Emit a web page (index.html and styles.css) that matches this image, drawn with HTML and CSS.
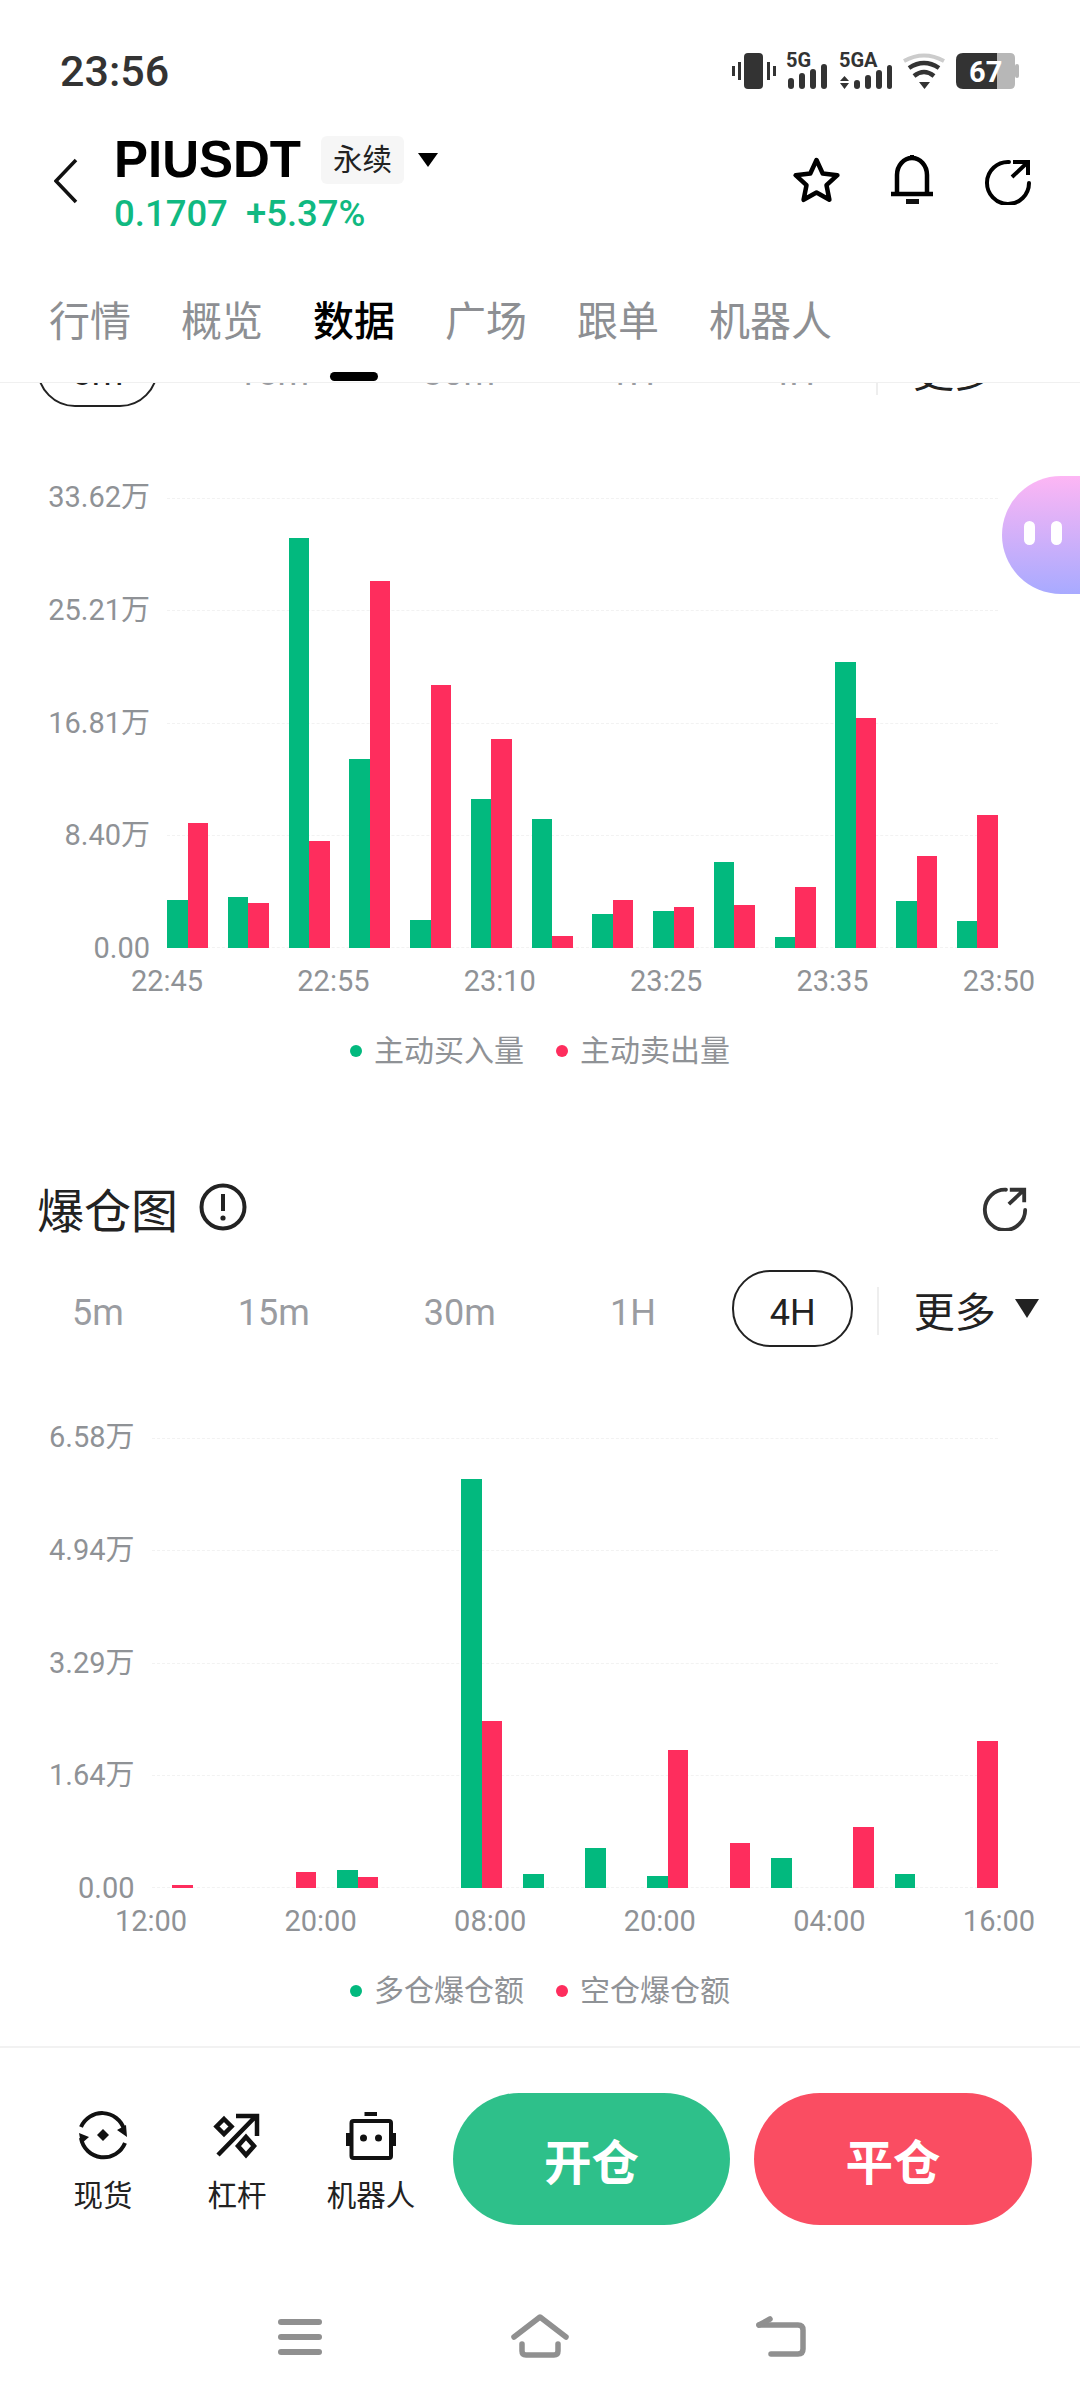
FILE: index.html
```html
<!DOCTYPE html>
<html lang="zh-CN">
<head>
    <meta charset="UTF-8">
    <meta name="viewport" content="width=device-width, initial-scale=1.0">
    <title>PIUSDT 数据</title>
    <link rel="stylesheet" href="styles.css">
</head>
<body>
    <svg class="defs" width="0" height="0">
        <symbol id="share-icon" viewBox="0 0 50 50">
            <path d="M26 7A21 21 0 1 0 46 28" fill="none" stroke="currentColor" stroke-width="4" stroke-linecap="round"/>
            <path d="M29 22L45 7M30 7H45V20" fill="none" stroke="currentColor" stroke-width="4"/>
        </symbol>
    </svg>

    <header class="page-header">
        <div class="status-bar">
            <span class="clock">23:56</span>
            <div class="status-icons">
                <svg width="44" height="36" viewBox="0 0 44 36" fill="#333">
                    <rect x="12" y="0" width="19" height="36" rx="4"/>
                    <rect x="6" y="9" width="3" height="18"/>
                    <rect x="0" y="13" width="3" height="10"/>
                    <rect x="35" y="9" width="3" height="18"/>
                    <rect x="41" y="13" width="3" height="10"/>
                </svg>
                <svg width="43" height="36" viewBox="0 0 43 36" fill="#333">
                    <text x="0" y="14" class="net-label">5G</text>
                    <rect x="2" y="25" width="6" height="11" rx="3"/>
                    <rect x="13" y="20" width="6" height="16" rx="3"/>
                    <rect x="24" y="16" width="6" height="20" rx="3"/>
                    <rect x="35" y="11" width="6" height="25" rx="3"/>
                </svg>
                <svg width="53" height="36" viewBox="0 0 53 36" fill="#333">
                    <text x="0" y="14" class="net-label">5GA</text>
                    <path d="M1 28L5.5 23L10 28ZM1 30L5.5 36L10 30Z"/>
                    <rect x="15" y="27" width="6" height="9" rx="3"/>
                    <rect x="26" y="22" width="6" height="14" rx="3"/>
                    <rect x="37" y="17" width="6" height="19" rx="3"/>
                    <rect x="48" y="12" width="5" height="24" rx="2.5"/>
                </svg>
                <svg width="44" height="36" viewBox="0 0 44 36" fill="none">
                    <path d="M2 8Q22 -3 42 8" stroke="#ccc" stroke-width="4"/>
                    <path d="M7 15Q22 5 37 15" stroke="#333" stroke-width="4.5"/>
                    <path d="M12 23Q22 15 32 23" stroke="#333" stroke-width="4.5"/>
                    <path d="M17 29H28L22.5 36Z" fill="#333"/>
                </svg>
                <svg width="64" height="36" viewBox="0 0 64 36">
                    <path d="M41 0H54Q59 0 59 5V31Q59 36 54 36H41Z" fill="#b7b7b7"/>
                    <rect x="59" y="11" width="4" height="14" rx="2" fill="#b7b7b7"/>
                    <path d="M41 0H7Q0 0 0 7V29Q0 36 7 36H41Z" fill="#333"/>
                    <text x="13" y="29" class="battery-label">67</text>
                </svg>
            </div>
        </div>

        <div class="top-bar">
            <svg class="back" width="24" height="46" viewBox="0 0 24 46">
                <path d="M22 2L2 23L22 44" fill="none" stroke="#111" stroke-width="3.5"/>
            </svg>
            <div class="symbol-info">
                <div class="symbol-line">
                    <span class="symbol-name">PIUSDT</span>
                    <span class="symbol-tag">永续</span>
                    <span class="caret"></span>
                </div>
                <div class="price-line">
                    <span>0.1707</span>
                    <span>+5.37%</span>
                </div>
            </div>
            <div class="top-actions">
                <svg width="50" height="50" viewBox="0 0 50 50">
                    <polygon points="25.5,5 31.7,18.5 46.4,20.2 35.5,30.2 38.4,44.8 25.5,37.5 12.6,44.8 15.5,30.2 4.6,20.2 19.3,18.5" fill="none" stroke="#000" stroke-width="4.5" stroke-linejoin="round"/>
                </svg>
                <svg width="50" height="50" viewBox="0 0 50 50">
                    <path d="M10 39V20A15 17 0 0 1 40 20V39" fill="none" stroke="#000" stroke-width="4.5"/>
                    <path d="M4 39H46" stroke="#000" stroke-width="4.5"/>
                    <path d="M25 0V4" stroke="#000" stroke-width="4"/>
                    <rect x="19" y="44" width="13" height="5" fill="#111"/>
                </svg>
                <svg class="share-top" width="50" height="50"><use href="#share-icon"/></svg>
            </div>
        </div>

        <nav class="tabs">
            <div class="tab">行情</div>
            <div class="tab">概览</div>
            <div class="tab active">数据</div>
            <div class="tab">广场</div>
            <div class="tab">跟单</div>
            <div class="tab">机器人</div>
        </nav>
    </header>

    <main class="content">
        <div class="range-row first-row">
            <span class="range selected">5m</span>
            <span class="range">15m</span>
            <span class="range">30m</span>
            <span class="range">1H</span>
            <span class="range">4H</span>
            <span class="range-sep"></span>
            <span class="range-more">更多<i class="caret dark"></i></span>
        </div>

        <section class="chart">
            <div class="y-axis">
                <span>33.62万</span>
                <span>25.21万</span>
                <span>16.81万</span>
                <span>8.40万</span>
                <span>0.00</span>
            </div>
            <div class="plot">
                <div class="grid-lines"><i></i><i></i><i></i><i></i><i></i></div>
                <div class="bars">
                    <div class="group"><div class="bar buy" style="height:48px"></div><div class="bar sell" style="height:125px"></div></div>
                    <div class="group"><div class="bar buy" style="height:51px"></div><div class="bar sell" style="height:45px"></div></div>
                    <div class="group"><div class="bar buy" style="height:410px"></div><div class="bar sell" style="height:107px"></div></div>
                    <div class="group"><div class="bar buy" style="height:189px"></div><div class="bar sell" style="height:367px"></div></div>
                    <div class="group"><div class="bar buy" style="height:28px"></div><div class="bar sell" style="height:263px"></div></div>
                    <div class="group"><div class="bar buy" style="height:149px"></div><div class="bar sell" style="height:209px"></div></div>
                    <div class="group"><div class="bar buy" style="height:129px"></div><div class="bar sell" style="height:12px"></div></div>
                    <div class="group"><div class="bar buy" style="height:34px"></div><div class="bar sell" style="height:48px"></div></div>
                    <div class="group"><div class="bar buy" style="height:37px"></div><div class="bar sell" style="height:41px"></div></div>
                    <div class="group"><div class="bar buy" style="height:86px"></div><div class="bar sell" style="height:43px"></div></div>
                    <div class="group"><div class="bar buy" style="height:11px"></div><div class="bar sell" style="height:61px"></div></div>
                    <div class="group"><div class="bar buy" style="height:286px"></div><div class="bar sell" style="height:230px"></div></div>
                    <div class="group"><div class="bar buy" style="height:47px"></div><div class="bar sell" style="height:92px"></div></div>
                    <div class="group"><div class="bar buy" style="height:27px"></div><div class="bar sell" style="height:133px"></div></div>
                </div>
            </div>
        </section>
        <div class="x-axis">
            <span>22:45</span><span>22:55</span><span>23:10</span><span>23:25</span><span>23:35</span><span>23:50</span>
        </div>
        <div class="legend">
            <span class="legend-item"><i class="dot buy"></i>主动买入量</span>
            <span class="legend-item"><i class="dot sell"></i>主动卖出量</span>
        </div>

        <div class="section-title">
            <h2>爆仓图</h2>
            <svg width="48" height="48" viewBox="0 0 48 48">
                <circle cx="24" cy="24" r="21.5" fill="none" stroke="#222" stroke-width="4"/>
                <path d="M24 11V28" stroke="#222" stroke-width="4"/>
                <circle cx="24" cy="35" r="2.6" fill="#222"/>
            </svg>
            <svg class="share-small" width="48" height="48"><use href="#share-icon"/></svg>
        </div>

        <div class="range-row second-row">
            <span class="range">5m</span>
            <span class="range">15m</span>
            <span class="range">30m</span>
            <span class="range">1H</span>
            <span class="range selected">4H</span>
            <span class="range-sep"></span>
            <span class="range-more">更多<i class="caret dark"></i></span>
        </div>

        <section class="chart wide">
            <div class="y-axis">
                <span>6.58万</span>
                <span>4.94万</span>
                <span>3.29万</span>
                <span>1.64万</span>
                <span>0.00</span>
            </div>
            <div class="plot">
                <div class="grid-lines"><i></i><i></i><i></i><i></i><i></i></div>
                <div class="bars">
                    <div class="group"><div class="bar buy"></div><div class="bar sell" style="height:3px"></div></div>
                    <div class="group"><div class="bar buy"></div><div class="bar sell"></div></div>
                    <div class="group"><div class="bar buy"></div><div class="bar sell" style="height:16px"></div></div>
                    <div class="group"><div class="bar buy" style="height:18px"></div><div class="bar sell" style="height:11px"></div></div>
                    <div class="group"><div class="bar buy"></div><div class="bar sell"></div></div>
                    <div class="group"><div class="bar buy" style="height:409px"></div><div class="bar sell" style="height:167px"></div></div>
                    <div class="group"><div class="bar buy" style="height:14px"></div><div class="bar sell"></div></div>
                    <div class="group"><div class="bar buy" style="height:40px"></div><div class="bar sell"></div></div>
                    <div class="group"><div class="bar buy" style="height:12px"></div><div class="bar sell" style="height:138px"></div></div>
                    <div class="group"><div class="bar buy"></div><div class="bar sell" style="height:45px"></div></div>
                    <div class="group"><div class="bar buy" style="height:30px"></div><div class="bar sell"></div></div>
                    <div class="group"><div class="bar buy"></div><div class="bar sell" style="height:61px"></div></div>
                    <div class="group"><div class="bar buy" style="height:14px"></div><div class="bar sell"></div></div>
                    <div class="group"><div class="bar buy"></div><div class="bar sell" style="height:147px"></div></div>
                </div>
            </div>
        </section>
        <div class="x-axis wide">
            <span>12:00</span><span>20:00</span><span>08:00</span><span>20:00</span><span>04:00</span><span>16:00</span>
        </div>
        <div class="legend">
            <span class="legend-item"><i class="dot buy"></i>多仓爆仓额</span>
            <span class="legend-item"><i class="dot sell"></i>空仓爆仓额</span>
        </div>
    </main>

    <footer class="action-bar">
        <div class="tool">
            <svg width="50" height="50" viewBox="0 0 50 50">
                <path d="M3 17A23 23 0 0 1 46 19M47 33A23 23 0 0 1 3 28" fill="none" stroke="#111" stroke-width="4"/>
                <path d="M49 27L39 20L48 15ZM1 23L11 27L3 34Z" fill="#111"/>
                <polygon points="25,19 31,25 25,31 19,25" fill="#111"/>
            </svg>
            <span>现货</span>
        </div>
        <div class="tool">
            <svg width="50" height="50" viewBox="0 0 50 50" fill="none" stroke="#111" stroke-width="4.5">
                <path d="M6 45L44 6M24 6H45V26"/>
                <polygon points="12,9 19.500,16.500 12,24 4.500,16.500"/>
                <polygon points="34,27 42,36 34,45 26,36"/>
            </svg>
            <span>杠杆</span>
        </div>
        <div class="tool">
            <svg width="50" height="50" viewBox="0 0 50 50">
                <rect x="18.5" y="2" width="12.5" height="4" fill="#111"/>
                <rect x="5.5" y="11" width="39.500" height="37" rx="2" fill="none" stroke="#111" stroke-width="4"/>
                <rect x="0" y="23" width="4" height="13" fill="#111"/>
                <rect x="46" y="23" width="4" height="13" fill="#111"/>
                <circle cx="17.500" cy="28" r="3.500" fill="#111"/>
                <circle cx="32.500" cy="28" r="3.500" fill="#111"/>
            </svg>
            <span>机器人</span>
        </div>
        <button class="trade open">开仓</button>
        <button class="trade close">平仓</button>
    </footer>

    <div class="system-nav">
        <svg width="60" height="48" viewBox="0 0 60 48" fill="#909090">
            <rect x="8" y="6" width="44" height="6" rx="3"/>
            <rect x="8" y="21" width="44" height="6" rx="3"/>
            <rect x="8" y="36" width="44" height="6" rx="3"/>
        </svg>
        <svg width="60" height="48" viewBox="0 0 60 48" fill="none" stroke="#909090" stroke-width="5.500" stroke-linecap="round" stroke-linejoin="round">
            <path d="M4 24L30 4L56 24"/>
            <path d="M12 31V38Q12 42 16 42H44Q48 42 48 38V31"/>
        </svg>
        <svg width="60" height="48" viewBox="0 0 60 48" fill="none" stroke="#909090" stroke-width="5.500" stroke-linecap="round" stroke-linejoin="round">
            <path d="M9 12H48Q53 12 53 17V36Q53 41 48 41H21"/>
            <path d="M9 12L20 6"/>
        </svg>
    </div>

    <div class="float-bot"><i></i><i></i></div>
</body>
</html>
```

FILE: styles.css
```css
body {
    margin: 0;
    width: 1080px;
    height: 2400px;
    overflow: hidden;
    position: relative;
    display: flex;
    flex-direction: column;
    background: #fff;
    color: #222;
    font-family: Roboto, "Noto Sans CJK SC", sans-serif;
}

.defs {
    position: absolute;
}

/* header */
.page-header {
    height: 382px;
    border-bottom: 1px solid #f0f0f0;
    flex-shrink: 0;
}

.status-bar {
    height: 77px;
    padding: 53px 60px 0;
    display: flex;
    justify-content: space-between;
}

.clock {
    font-size: 43px;
    font-weight: 500;
    line-height: 36px;
    color: #333;
}

.status-icons {
    display: flex;
    gap: 10px;
}

.status-icons svg {
    overflow: visible;
}

.net-label {
    font-size: 20px;
    font-weight: 700;
}

.battery-label {
    font-size: 29px;
    font-weight: 700;
    fill: #fff;
}

.top-bar {
    height: 155px;
    padding: 5px 47px 0 54px;
    display: flex;
    align-items: flex-start;
}

.back {
    margin-top: 23px;
}

.symbol-info {
    margin-left: 36px;
}

.symbol-line {
    display: flex;
    align-items: center;
    height: 48px;
}

.symbol-name {
    font-family: "Liberation Sans", Arial, sans-serif;
    font-size: 51px;
    font-weight: 700;
    color: #000;
}

.symbol-tag {
    margin: 2px 0 0 20px;
    width: 83px;
    height: 48px;
    line-height: 48px;
    text-align: center;
    background: #f6f6f6;
    border-radius: 6px;
    font-size: 29.500px;
    color: #222;
}

.caret {
    display: block;
    width: 0;
    height: 0;
    border-left: 10px solid transparent;
    border-right: 10px solid transparent;
    border-top: 14px solid #000;
}

.symbol-line .caret {
    margin: 2px 0 0 14px;
}

.caret.dark {
    border-left-width: 12px;
    border-right-width: 12px;
    border-top: 19px solid #222;
}

.price-line {
    margin-top: 11px;
    height: 40px;
    line-height: 40px;
    font-size: 36.500px;
    font-weight: 500;
    color: #10b981;
    display: flex;
    gap: 18px;
}

.top-actions {
    margin: 20px 0 0 auto;
    display: flex;
    gap: 46px;
}

.share-top {
    color: #000;
}

.tabs {
    padding: 0 49px;
    display: flex;
    gap: 50px;
}

.tab {
    height: 92px;
    line-height: 64px;
    font-size: 41px;
    color: #8d8f93;
    position: relative;
}

.tab.active {
    color: #000;
    font-weight: 500;
}

.tab.active::after {
    content: "";
    position: absolute;
    left: 17px;
    bottom: 1px;
    width: 48px;
    height: 9px;
    border-radius: 5px;
    background: #000;
}

/* scrolled content */
.content {
    flex: 1;
    overflow: hidden;
    min-height: 0;
}

.range-row {
    height: 77px;
    padding-left: 37px;
    display: flex;
    align-items: center;
    gap: 44px;
}

.first-row {
    margin-top: -53px;
}

.second-row {
    margin-top: 33px;
}

.range {
    box-sizing: border-box;
    height: 77px;
    line-height: 77px;
    padding: 5px 35px 0;
    border: 0 solid #222;
    font-size: 36px;
    color: #9a9ca1;
}

.range.selected {
    min-width: 121px;
    padding: 5px 0 0;
    line-height: 72px;
    text-align: center;
    border-width: 2.5px;
    border-radius: 38px;
    color: #222;
}

.second-row .range.selected {
    margin: 0 -2.5px;
}

.range-sep {
    width: 2px;
    height: 48px;
    background: #eee;
    margin: 4px 0 0 -18px;
}

.range-more {
    margin-left: -9px;
    display: flex;
    align-items: center;
    gap: 19px;
    font-size: 41px;
    color: #222;
}

.chart {
    margin-top: 91px;
    height: 450px;
    display: grid;
    grid-template-columns: 167px 831px;
}

.chart.wide {
    grid-template-columns: 151.5px 846.5px;
}

.y-axis {
    padding-right: 17px;
    display: flex;
    flex-direction: column;
    justify-content: space-between;
    align-items: flex-end;
    font-size: 29px;
    color: #8f9296;
}

.y-axis span {
    height: 0;
    line-height: 0;
    margin-top: -1px;
}

.plot {
    position: relative;
}

.grid-lines {
    height: 100%;
    display: flex;
    flex-direction: column;
    justify-content: space-between;
}

.grid-lines i {
    display: block;
    height: 0;
    border-top: 1px dashed #f2f2f2;
}

.bars {
    position: absolute;
    inset: 0;
    display: flex;
    justify-content: space-between;
    align-items: flex-end;
}

.group {
    width: 41px;
    display: flex;
    align-items: flex-end;
}

.bar {
    flex: 1;
}

.buy {
    background: #02b97e;
}

.sell {
    background: #fe2d5d;
}

.x-axis {
    margin: 13px 41px 0 127px;
    height: 40px;
    line-height: 40px;
    display: flex;
    justify-content: space-between;
    font-size: 29px;
    color: #8f9296;
}

.x-axis.wide {
    margin-left: 111px;
}

.x-axis span {
    width: 80px;
    text-align: center;
}

.legend {
    margin-top: 30px;
    height: 40px;
    display: flex;
    justify-content: center;
    gap: 32px;
    font-size: 30px;
    line-height: 40px;
    color: #8f9296;
}

.legend-item {
    display: flex;
    align-items: center;
    gap: 12px;
}

.dot {
    width: 12px;
    height: 12px;
    border-radius: 50%;
}

.section-title {
    margin-top: 106px;
    height: 60px;
    padding: 0 51px 0 37px;
    display: flex;
    align-items: center;
    gap: 21px;
}

.section-title h2 {
    margin: 0;
    font-size: 47px;
    font-weight: 400;
    color: #222;
}

.share-small {
    margin-left: auto;
    color: #333;
}

/* bottom bar */
.action-bar {
    box-sizing: border-box;
    height: 267px;
    flex-shrink: 0;
    border-top: 2px solid #f2f2f2;
    padding: 45px 48px 0 36px;
    display: flex;
    align-items: flex-start;
}

.tool {
    width: 134px;
    margin-top: 17px;
    display: flex;
    flex-direction: column;
    align-items: center;
    font-size: 29.500px;
    color: #222;
}

.tool span {
    margin-top: 16px;
    line-height: 40px;
}

.trade {
    height: 132px;
    border: none;
    border-radius: 66px;
    color: #fff;
    font-family: inherit;
    font-size: 47.500px;
    font-weight: 700;
    padding: 0;
}

.trade.open {
    width: 277px;
    margin-left: 15px;
    background: #2ec08a;
}

.trade.close {
    width: 278px;
    margin-left: 24px;
    background: #fa4d62;
}

.system-nav {
    height: 87px;
    flex-shrink: 0;
    display: flex;
    justify-content: center;
    gap: 180px;
}

/* assistant bubble on the right edge */
.float-bot {
    position: absolute;
    left: 1002px;
    top: 476px;
    width: 78px;
    height: 118px;
    border-radius: 59px 0 0 59px;
    background: linear-gradient(#fdb6f4, #a8aaff);
    display: flex;
    gap: 16px;
    padding: 45px 0 0 22px;
    box-sizing: border-box;
}

.float-bot i {
    width: 11px;
    height: 24px;
    border-radius: 6px;
    background: #fff;
}
```
